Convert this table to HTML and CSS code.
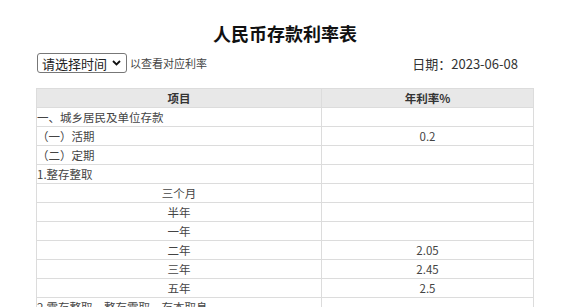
FILE: index.html
```html
<!DOCTYPE html>
<html lang="zh-CN">
<head>
<meta charset="utf-8">
<title>人民币存款利率表</title>
<link rel="stylesheet" href="styles.css">
</head>
<body>
<div class="page">
  <h1 class="title">人民币存款利率表</h1>
  <div class="toolbar">
    <div class="picker">
      <label class="select-box">
        <select class="select">
          <option>请选择时间</option>
        </select>
        <svg class="chev" width="9" height="6" viewBox="0 0 9 6"><path d="M1 1 L4.5 4.5 L8 1" fill="none" stroke="#111" stroke-width="1.8"/></svg>
      </label>
      <span class="hint">以查看对应利率</span>
    </div>
    <div class="date">日期：2023-06-08</div>
  </div>
  <table class="rates">
    <thead>
      <tr><th class="c1">项目</th><th class="c2">年利率%</th></tr>
    </thead>
    <tbody>
      <tr><td class="left">一、城乡居民及单位存款</td><td></td></tr>
      <tr><td class="left">（一）活期</td><td>0.2</td></tr>
      <tr><td class="left">（二）定期</td><td></td></tr>
      <tr><td class="left">1.整存整取</td><td></td></tr>
      <tr><td>三个月</td><td></td></tr>
      <tr><td>半年</td><td></td></tr>
      <tr><td>一年</td><td></td></tr>
      <tr><td>二年</td><td>2.05</td></tr>
      <tr><td>三年</td><td>2.45</td></tr>
      <tr><td>五年</td><td>2.5</td></tr>
      <tr><td class="left">2.零存整取、整存零取、存本取息</td><td></td></tr>
    </tbody>
  </table>
</div>
</body>
</html>
```
FILE: styles.css
```css
html, body {
  margin: 0;
  padding: 0;
  background: #fff;
}
body {
  font-family: "Noto Sans CJK SC", "Noto Sans", sans-serif;
  color: #333;
}
.page {
  width: 498px;
  margin-left: 36px;
  padding-top: 21px;
}
.title {
  margin: 0;
  font-size: 18px;
  line-height: 24px;
  font-weight: bold;
  text-align: center;
  color: #111;
}
.toolbar {
  margin-top: 8px;
  height: 20px;
  display: flex;
  align-items: center;
  justify-content: space-between;
  padding-left: 1px;
  padding-right: 16px;
}
.picker {
  display: flex;
  align-items: center;
  gap: 3px;
}
.select-box {
  box-sizing: border-box;
  width: 90px;
  height: 20px;
  border: 1px solid #777;
  border-radius: 3px;
  display: flex;
  align-items: center;
  padding: 0 6px 0 4px;
  gap: 4px;
  background: #fff;
}
.select {
  appearance: none;
  -webkit-appearance: none;
  border: none;
  background: transparent;
  padding: 0;
  margin: 0;
  font-family: inherit;
  font-size: 13px;
  color: #222;
  width: 66px;
  outline: none;
}
.chev {
  display: block;
  flex: none;
}
.hint {
  font-size: 11px;
  color: #444;
}
.date {
  font-size: 13px;
  color: #333;
}
.rates {
  margin-top: 15px;
  width: 498px;
  border-collapse: collapse;
  table-layout: fixed;
  font-size: 11.5px;
}
.rates th, .rates td {
  border: 1px solid #dcdcdc;
  height: 18px;
  padding: 0;
  line-height: 18px;
  text-align: center;
  vertical-align: middle;
  color: #444;
}
.rates th {
  background: #e8e8e8;
  font-weight: bold;
  color: #333;
}
.rates .c1 {
  width: 284px;
}
.rates td.left {
  text-align: left;
}
```
